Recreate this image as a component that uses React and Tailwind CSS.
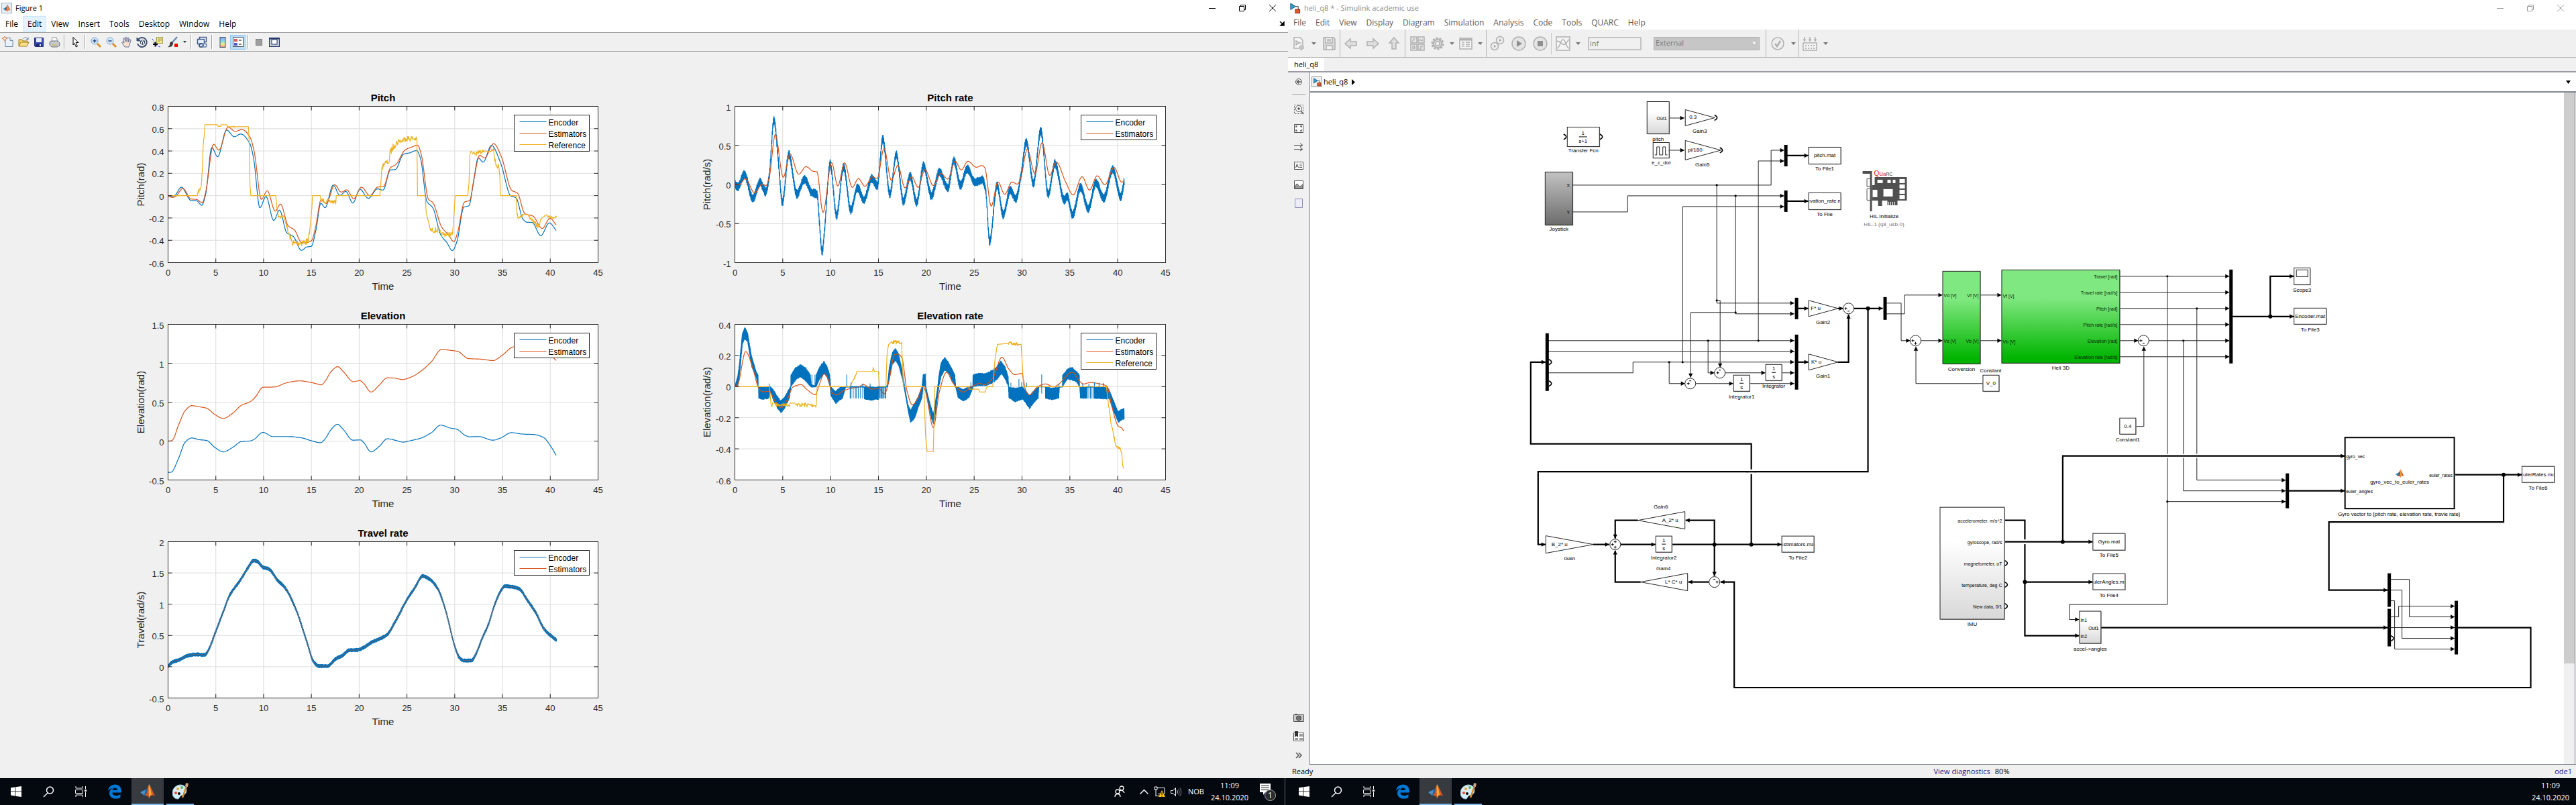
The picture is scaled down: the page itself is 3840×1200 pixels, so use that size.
import React from "react";

const BLUE = "#0072bd";
const ORANGE = "#d95319";
const YELLOW = "#edb120";

/* ---------- trace helpers ---------- */

const parse = (s) =>
  s
    .trim()
    .split(/\s+/)
    .map((p) => p.split(",").map(Number));

function makeRandom(seed) {
  let s = seed;
  return () => {
    s = (s * 16807) % 2147483647;
    return s / 2147483647;
  };
}

function smoothAt(points) {
  const n = points.length;
  const d = [];
  for (let i = 0; i < n - 1; i++) d.push((points[i + 1][1] - points[i][1]) / (points[i + 1][0] - points[i][0]));
  const m = points.map((_, i) => {
    if (i === 0) return d[0];
    if (i === n - 1) return d[n - 2];
    return d[i - 1] * d[i] <= 0 ? 0 : (2 * d[i - 1] * d[i]) / (d[i - 1] + d[i]);
  });
  return (x) => {
    let i = 0;
    while (i < n - 2 && x > points[i + 1][0]) i++;
    const h = points[i + 1][0] - points[i][0];
    const t = (x - points[i][0]) / h;
    const t2 = t * t;
    const t3 = t2 * t;
    return (
      (2 * t3 - 3 * t2 + 1) * points[i][1] +
      (t3 - 2 * t2 + t) * h * m[i] +
      (-2 * t3 + 3 * t2) * points[i + 1][1] +
      (t3 - t2) * h * m[i + 1]
    );
  };
}

function samples(trace) {
  const points = parse(trace.pts);
  const rnd = makeRandom(trace.seed || 7);
  const out = [];
  if (trace.kind === "smooth") {
    const f = smoothAt(points);
    for (let x = points[0][0]; x <= points[points.length - 1][0]; x += 2) out.push([x, f(x)]);
  } else if (trace.kind === "noisy") {
    const f = smoothAt(points);
    let k = 0;
    for (let x = points[0][0]; x <= points[points.length - 1][0]; x += 1) {
      k++;
      out.push([x, f(x) + (k % 2 ? 1 : -1) * trace.amp * (0.65 + 0.35 * rnd())]);
    }
  } else if (trace.kind === "band") {
    for (let i = 0; i < points.length - 1; i++) {
      const [xa, ta, ba] = points[i];
      const [xb, tb, bb] = points[i + 1];
      for (let x = xa; x < xb; x += 1) {
        const t = (x - xa) / (xb - xa);
        const top = ta + (tb - ta) * t;
        const bottom = ba + (bb - ba) * t;
        const j = (bottom - top) * 0.08 * rnd();
        out.push([x, top + j], [x + 0.5, bottom - j]);
      }
    }
  } else {
    points.forEach(([x, y, amp], i) => {
      out.push([x, y]);
      const next = points[i + 1];
      if (amp && next) {
        for (let u = x + 1.5; u < next[0]; u += 1.5) {
          const t = (u - x) / (next[0] - x);
          out.push([u, y + (next[1] - y) * t + (rnd() - 0.5) * 2 * amp]);
        }
      }
    });
  }
  return out;
}

function Chart({ title, ylabel, yticks, extent, plot, labelX, traces, spikes, legend }) {
  const [x0, y0, w, h] = plot;
  const [ex0, ex1, ey0, ey1] = extent;
  const X = (v) => x0 + ((v - ex0) * w) / (ex1 - ex0);
  const Y = (v) => y0 + ((v - ey0) * h) / (ey1 - ey0);
  const xt = [0, 5, 10, 15, 20, 25, 30, 35, 40, 45];
  const tx = (i) => x0 + (i * w) / 9;
  const ty = (i) => y0 + (i * h) / (yticks.length - 1);
  const cx = x0 + w / 2;
  const midY = y0 + h / 2;
  const legendH = legend.length === 3 ? 54 : 37;
  const colors = [BLUE, ORANGE, YELLOW];
  return (
    <svg viewBox="0 0 720 325" className="block w-full font-['Liberation_Sans',sans-serif]" role="img" aria-label={title}>
      <rect x={x0} y={y0} width={w} height={h} fill="#fff" />
      <g stroke="#dcdcdc">
        {xt.slice(1, -1).map((v, i) => (
          <line key={v} x1={tx(i + 1)} x2={tx(i + 1)} y1={y0} y2={y0 + h} />
        ))}
        {yticks.slice(1, -1).map((v, i) => (
          <line key={v} x1={x0} x2={x0 + w} y1={ty(i + 1)} y2={ty(i + 1)} />
        ))}
      </g>
      {traces.map((t, i) => (
        <polyline
          key={i}
          fill="none"
          stroke={t.color}
          strokeWidth={t.width || 1.2}
          strokeLinejoin="round"
          points={samples(t)
            .map(([a, b]) => `${X(a).toFixed(2)},${Y(b).toFixed(2)}`)
            .join(" ")}
        />
      ))}
      {spikes &&
        parse(spikes).map(([a, t, b], i) => <line key={i} x1={X(a)} x2={X(a)} y1={Y(t)} y2={Y(b)} stroke={BLUE} />)}
      <rect x={x0} y={y0} width={w} height={h} fill="none" stroke="#262626" />
      <g stroke="#262626">
        {xt.slice(1, -1).map((v, i) => (
          <path key={v} d={`M${tx(i + 1)} ${y0}v6M${tx(i + 1)} ${y0 + h}v-6`} />
        ))}
        {yticks.slice(1, -1).map((v, i) => (
          <path key={v} d={`M${x0} ${ty(i + 1)}h6M${x0 + w} ${ty(i + 1)}h-6`} />
        ))}
      </g>
      <g fill="#262626" fontSize="13">
        {xt.map((v, i) => (
          <text key={v} x={tx(i)} y={y0 + h + 19} textAnchor="middle">
            {v}
          </text>
        ))}
        {yticks.map((v, i) => (
          <text key={v} x={x0 - 6} y={ty(i) + 6} textAnchor="end">
            {v}
          </text>
        ))}
      </g>
      <text x={cx} y={y0 - 8} textAnchor="middle" fontSize="15" fontWeight="700" fill="#000">
        {title}
      </text>
      <text x={cx} y={y0 + h + 40} textAnchor="middle" fontSize="15" fill="#262626">
        Time
      </text>
      <text transform={`translate(${labelX} ${midY}) rotate(-90)`} textAnchor="middle" fontSize="15" fill="#262626">
        {ylabel}
      </text>
      <rect x={x0 + 516} y={y0 + 13} width="112" height={legendH} fill="#fff" stroke="#262626" />
      {legend.map((name, i) => (
        <g key={name}>
          <line x1={x0 + 524} x2={x0 + 564} y1={y0 + 23 + i * 17} y2={y0 + 23 + i * 17} stroke={colors[i]} />
          <text x={x0 + 567} y={y0 + 28 + i * 17} fontSize="12" fill="#000">
            {name}
          </text>
        </g>
      ))}
    </svg>
  );
}

const TWO = ["Encoder", "Estimators"];
const THREE = ["Encoder", "Estimators", "Reference"];

const travel =
  "110,1311 125,1295 145,1288 175,1272 205,1268 230,1270 240,1255 265,1185 290,1112 310,1055 325,1030 345,1000 370,955 388,930 398,932 420,955 437,960 465,1000 490,1028 525,1105 560,1220 583,1295 600,1310 630,1310 640,1300 655,1283 675,1273 698,1253 725,1252 745,1243 770,1225 800,1210 820,1198 850,1145 885,1072 910,1030 937,986 960,998 985,1030 1010,1105 1040,1235 1055,1278 1070,1290 1095,1290 1108,1270 1130,1210 1150,1160 1170,1090 1190,1040 1203,1022 1225,1024 1250,1032 1275,1070 1305,1120 1330,1175 1350,1198 1371,1216";

const charts = [
  {
    title: "Pitch",
    ylabel: "Pitch(rad)",
    yticks: ["0.8", "0.6", "0.4", "0.2", "0", "-0.2", "-0.4", "-0.6"],
    plot: [50.5, 28.5, 641, 233],
    extent: [110, 1506, 85, 785],
    labelX: 15,
    legend: THREE,
    traces: [
      {
        color: BLUE,
        kind: "smooth",
        pts: "110,487 125,487 133,483 153,447 185,507 203,508 219,528 232,480 252,269 271,311 300,191 325,221 346,209 375,250 388,320 408,539 428,489 453,596 472,550 495,650 517,668 543,730 560,715 575,712 590,640 606,519 620,539 646,438 668,484 687,466 710,518 733,456 760,497 790,455 808,460 832,370 848,368 874,300 895,293 917,283 930,320 950,510 970,540 995,660 1015,695 1033,731 1048,690 1070,537 1087,530 1100,440 1117,316 1133,335 1160,260 1190,340 1222,485 1240,495 1262,590 1275,604 1292,605 1320,664 1348,607 1370,641",
      },
      {
        color: ORANGE,
        kind: "smooth",
        pts: "110,487 125,493 135,488 158,453 185,500 203,502 221,517 232,470 258,255 275,281 305,178 328,197 350,189 375,220 390,290 413,502 432,463 458,554 475,523 500,620 520,638 545,697 560,695 576,686 590,620 606,506 624,520 651,436 672,469 690,459 713,499 738,447 765,485 790,447 810,443 832,360 850,345 880,280 900,268 920,259 932,300 955,500 970,517 998,625 1020,660 1038,691 1050,650 1072,515 1090,505 1103,410 1122,304 1138,316 1167,252 1192,310 1225,460 1245,475 1268,565 1295,577 1325,632 1350,586 1370,616",
      },
      {
        color: YELLOW,
        kind: "line",
        pts: "110,485 205,485 207,470,8 215,455 218,440 222,350 224,260 228,210 230,167 270,167 273,175 280,175 282,167 301,167 303,176,3 330,176 371,176 374,260 376,440 379,485 460,485 463,540,12 468,575,9 488,582,9 493,610,12 500,650,14 512,690,18 520,700,16 565,690,12 570,640 577,540 579,485 604,485 606,508,12 625,508,9 655,515 656,485 797,485,10 800,440,10 803,380,12 807,350,12 815,338,12 828,335 830,295,16 845,258,16 860,240,12 870,240,14 880,228,14 905,230,10 918,232 920,485 945,485 948,560 955,600,8 962,640,12 992,640,6 997,658,11 1033,658 1037,600 1042,485 1083,485 1087,430 1090,300 1093,285 1100,298,10 1118,296,12 1133,280,10 1145,288,8 1167,275 1170,330,16 1183,355,16 1187,390 1189,485 1240,485 1243,570,10 1248,583,8 1262,570 1276,570,9 1290,590,8 1300,610,12 1315,622 1320,590 1338,570 1343,580,6 1371,582",
      },
    ],
  },
  {
    title: "Pitch rate",
    ylabel: "Pitch(rad/s)",
    yticks: ["1", "0.5", "0", "-0.5", "-1"],
    plot: [55.5, 28.5, 642, 233],
    extent: [121, 1519, 85, 785],
    labelX: 19,
    legend: TWO,
    traces: [
      {
        color: BLUE,
        kind: "noisy",
        amp: 20,
        pts: "121,434 130,445 152,390 179,498 203,425 221,468 232,400 248,148 262,330 275,515 296,300 322,478 347,412 370,470 388,480 395,600 404,736 412,640 430,342 451,573 474,355 497,550 519,450 540,505 565,408 583,440 601,232 624,478 645,302 668,510 690,397 711,517 733,352 759,485 785,380 812,450 832,328 853,440 875,365 900,425 925,415 935,460 948,690 972,440 992,570 1015,460 1033,500 1050,390 1067,245 1090,430 1114,195 1138,480 1160,342 1190,505 1200,490 1217,572 1243,447 1268,545 1293,427 1318,498 1348,367 1373,490 1385,420",
      },
      {
        color: ORANGE,
        kind: "smooth",
        pts: "121,437 135,436 155,409 185,473 210,433 222,440 233,400 252,211 278,403 300,299 328,389 352,355 375,376 387,378 407,560 435,337 455,442 477,338 502,448 522,409 543,443 568,401 583,408 605,274 629,417 650,349 673,450 695,401 716,448 738,368 765,440 790,385 812,411 836,331 856,370 877,331 905,358 922,350 932,360 953,532 975,424 997,479 1020,424 1038,433 1050,400 1070,277 1095,388 1118,248 1143,394 1164,335 1195,425 1219,482 1248,400 1272,460 1297,396 1322,436 1352,359 1377,425 1385,415",
      },
    ],
  },
  {
    title: "Elevation",
    ylabel: "Elevation(rad)",
    yticks: ["1.5", "1", "0.5", "0", "-0.5"],
    plot: [50.5, 28.5, 641, 232],
    extent: [110, 1506, 81, 640],
    labelX: 15,
    legend: TWO,
    traces: [
      {
        color: BLUE,
        kind: "smooth",
        pts: "110,613 120,612 145,560 165,505 187,489 210,495 235,498 262,523 289,539 320,523 348,502 375,500 388,495 418,469 450,484 500,484 545,489 575,499 605,506 618,495 640,458 660,440 680,460 710,497 735,496 745,505 769,539 795,520 822,492 850,498 872,504 900,498 930,490 965,470 995,443 1025,453 1048,458 1075,480 1090,485 1118,484 1165,497 1190,489 1225,470 1260,475 1300,477 1330,488 1350,515 1371,553",
      },
      {
        color: ORANGE,
        kind: "smooth",
        pts: "110,500 122,499 145,440 165,392 187,373 210,377 235,382 262,405 289,419 320,400 348,372 378,358 395,340 418,307 455,306 495,291 537,284 580,291 608,298 620,285 640,250 661,233 680,252 712,287 733,283 745,293 769,324 795,300 822,273 845,274 870,279 900,270 930,250 965,215 997,172 1050,178 1085,204 1125,206 1165,211 1195,192 1232,162 1300,160 1340,180 1371,212",
      },
    ],
  },
  {
    title: "Elevation rate",
    ylabel: "Elevation(rad/s)",
    yticks: ["0.4", "0.2", "0", "-0.2", "-0.4", "-0.6"],
    plot: [55.5, 28.5, 642, 232],
    extent: [121, 1519, 100, 797],
    labelX: 19,
    legend: THREE,
    traces: [
      {
        color: BLUE,
        kind: "band",
        pts: "121,378,380 130,330,378 135,280,340 145,140,190 153,112,165 162,135,180 175,240,290 190,310,340 196,325,378 197,379,380 198,379,432 212,379,437 231,379,432 236,379,400 245,390,440 258,420,475 270,440,498 282,425,478 298,385,430 302,379,381 303,325,379 318,292,350 334,280,335 350,292,355 366,325,379 369,370,381 382,375,380 385,325,379 395,290,350 410,264,320 420,285,340 429,325,378 432,379,420 448,400,455 462,379,440 470,379,432 480,379,381 540,379,381 541,379,435 565,379,441 586,379,437 587,379,381 612,379,381 616,370,379 622,290,345 632,225,280 642,207,262 652,230,285 665,310,350 675,400,425 683,460,490 691,482,542 705,450,520 715,425,475 728,379,430 732,322,379 739,322,379 741,379,410 748,420,455 758,470,520 765,500,548 770,460,520 778,390,430 783,330,379 790,270,335 802,247,305 815,270,320 835,325,378 838,379,385 845,379,430 862,390,445 880,379,430 893,379,385 894,325,379 912,318,375 935,320,375 955,305,365 970,290,350 985,262,322 998,290,345 1008,330,379 1010,379,430 1030,385,448 1055,379,435 1062,390,450 1077,418,478 1092,395,450 1105,379,432 1107,379,380 1128,379,380 1129,379,432 1150,385,438 1172,380,432 1174,379,381 1184,379,381 1185,325,379 1200,300,345 1215,291,350 1230,310,360 1239,325,379 1240,379,381 1242,379,432 1262,379,432 1263,379,381 1285,379,381 1286,379,432 1328,379,436 1335,390,432 1350,440,490 1365,490,540 1375,480,530 1385,474,525",
      },
      {
        color: ORANGE,
        kind: "smooth",
        pts: "121,379 130,370 156,222 178,290 198,385 212,402 232,400 250,440 271,473 290,440 310,380 336,370 355,392 382,415 395,370 411,321 425,350 436,405 448,416 475,397 500,386 520,382 538,370 565,390 588,388 607,411 620,360 640,235 650,233 663,250 680,400 697,461 715,430 732,376 740,400 765,562 785,400 808,315 830,365 862,403 890,378 915,365 932,370 958,340 988,247 1010,300 1030,325 1052,320 1065,395 1077,416 1105,378 1130,367 1155,380 1170,370 1217,314 1240,355 1253,367 1275,360 1300,365 1328,376 1345,470 1365,555 1377,565 1384,580",
      },
      {
        color: YELLOW,
        kind: "line",
        pts: "121,379 233,379 238,455 241,470 243,452 250,452 253,460,9 299,460 301,452 316,453 319,460,10 385,462 388,379 495,379 499,365 505,350,10 513,330 517,311 568,311 570,293 574,311 587,311 590,379 611,379 615,230 620,190 628,180,9 662,180 668,379 734,379 740,600 745,670 765,670 768,500 770,379 880,379 882,390 912,390 915,403 934,403 936,390 940,379 958,379 965,260 973,190 1008,185,8 1040,190 1050,190 1055,300 1058,379 1327,379 1333,450,8 1340,520,12 1350,600,12 1360,650,5 1372,655,6 1376,670 1380,735 1384,745",
      },
    ],
    spikes:
      "232,365,379 371,325,379 381,325,379 484,325,379 495,379,432 498,360,432 505,379,432 512,379,432 516,379,432 522,379,432 529,379,432 536,365,432 560,365,379 590,379,432 592,379,432 595,379,432 598,379,432 601,379,432 604,379,432 608,379,432 611,379,432 887,360,379 1017,362,379 1043,345,379 1052,360,379 1068,362,379 1117,325,410 1173,365,379 1250,365,379 1265,379,432 1270,365,432 1275,379,432 1280,379,432 1288,360,379 1303,362,379 1317,362,379",
  },
  {
    title: "Travel rate",
    ylabel: "Travel(rad/s)",
    yticks: ["2", "1.5", "1", "0.5", "0", "-0.5"],
    plot: [50.5, 27.5, 641, 233],
    extent: [110, 1506, 862, 1425],
    labelX: 15,
    legend: TWO,
    traces: [
      { color: BLUE, kind: "noisy", amp: 6, width: 1.5, pts: travel },
      { color: ORANGE, kind: "smooth", width: 0.6, pts: travel },
    ],
  },
];

/* ---------- shared glyphs ---------- */

function MatlabMark({ className }) {
  return (
    <svg viewBox="0 0 24 24" className={className} aria-hidden="true">
      <path d="M1 14l8-4 3 3-5 6z" fill="#4a90c8" />
      <path d="M9 10c2-1 3-4 5-7l1 9-3 5-3 2-2 0z" fill="#2b5f8c" />
      <path d="M14 2c3 3 6 12 9 17-4-1-7-1-9 4-1-4-3-4-6-4 4-3 4-12 6-17z" fill="#d6562b" />
      <path d="M14 2c2 4 3 10 4 16-2 0-3 2-4 5 0-8-1-14 0-21z" fill="#f3a83b" />
    </svg>
  );
}

function SimulinkMark({ className }) {
  return (
    <svg viewBox="0 0 18 18" className={className} aria-hidden="true">
      <path d="M2 1l8 5-8 5z" fill="#2b9fd8" stroke="#1c4d70" />
      <path d="M10 6h4v5" fill="none" stroke="#333" />
      <rect x="9.500" y="10.500" width="7" height="6" fill="#e0572a" stroke="#7c2a10" />
    </svg>
  );
}

function WindowControls({ color }) {
  return (
    <div className="ml-auto flex pr-px">
      {["Minimize", "Restore", "Close"].map((name, i) => (
        <button key={name} aria-label={name} className="flex h-6 w-[45px] items-center justify-center">
          <svg width="10" height="10" viewBox="0 0 10 10" fill="none" stroke={color} aria-hidden="true">
            {i === 0 && <path d="M0 5.500h10" />}
            {i === 1 && <path d="M.5 2.500h7v7h-7zM2.500 2.500v-2h7v7h-2" />}
            {i === 2 && <path d="M0 0l10 10M10 0L0 10" />}
          </svg>
        </button>
      ))}
    </div>
  );
}

/* ---------- figure window ---------- */

const figureTools = [
  {
    name: "New Figure",
    art: (
      <g>
        <path d="M5 2.500h7l4 4v9H5z" fill="#eaf3fc" stroke="#6f87a8" />
        <path d="M12 2.500v4h4" fill="#fff" stroke="#6f87a8" />
        <circle cx="4" cy="3.500" r="2.200" fill="#fff" stroke="#d9622b" />
        <path d="M4 0v1M4 6v2M0 3.500h1M7 3.500h1" stroke="#d9622b" />
      </g>
    ),
  },
  {
    name: "Open File",
    art: (
      <g>
        <path d="M2 15V5h5l1 2h7v3" fill="#f5d56b" stroke="#a07a1a" />
        <path d="M2 15l3-6h12l-3 6z" fill="#fbe28a" stroke="#a07a1a" />
        <path d="M9 4c2-3 5-2 6 0M16 2v3h-3" fill="none" stroke="#4a6a9a" />
      </g>
    ),
  },
  {
    name: "Save Figure",
    art: (
      <g>
        <path d="M2.500 2.500h13v13h-12l-1-1z" fill="#3549b5" stroke="#1d2a72" />
        <rect x="5" y="3" width="8" height="6" fill="#e9ecfb" />
        <rect x="5" y="11" width="8" height="4.500" fill="#1d2a72" />
        <rect x="10" y="12" width="2" height="3" fill="#dfe4f7" />
      </g>
    ),
  },
  {
    name: "Print Figure",
    art: (
      <g>
        <path d="M5 8l1-6h6l2 5" fill="#fff" stroke="#8a8f98" />
        <path d="M2 9l3-2h9l3 3v4l-4 2H5l-3-3z" fill="#c5c8ce" stroke="#6d7178" />
        <path d="M5 13h8" stroke="#d8b53a" />
      </g>
    ),
  },
  null,
  {
    name: "Edit Plot",
    art: <path d="M6 1.500l8 8h-4l2.500 5.500-2 1L8 10.500 6 13z" fill="#fff" stroke="#000" />,
  },
  null,
  {
    name: "Zoom In",
    art: (
      <g>
        <path d="M11 11l5 5" stroke="#d9902b" strokeWidth="3" />
        <circle cx="7" cy="7" r="5" fill="#cfe6fa" stroke="#7fa6c9" />
        <path d="M4.500 7h5M7 4.500v5" stroke="#1c3f77" strokeWidth="1.500" />
      </g>
    ),
  },
  {
    name: "Zoom Out",
    art: (
      <g>
        <path d="M11 11l5 5" stroke="#d9902b" strokeWidth="3" />
        <circle cx="7" cy="7" r="5" fill="#cfe6fa" stroke="#7fa6c9" />
        <path d="M4.500 7h5" stroke="#1c3f77" strokeWidth="1.500" />
      </g>
    ),
  },
  {
    name: "Pan",
    art: (
      <path
        d="M6 16l-4-6c-1-2 1-2 2-1l1 1-1-6c0-2 2-2 2 0l1 4 0-6c0-1 2-1 2 0l0 6 1-5c1-1 2-1 2 0l-1 6 2-4c1-1 2 0 2 1l-2 7-1 3z"
        fill="#fbe0cc"
        stroke="#5d6f9c"
      />
    ),
  },
  {
    name: "Rotate 3D",
    art: (
      <g fill="none" stroke="#3d4f6e">
        <path d="M3 5a7 7 0 1 1-1 6" strokeWidth="2" />
        <path d="M1 2v5h5z" fill="#3d4f6e" />
        <path d="M6.500 7l3-1.500 3 1.500v4l-3 1.500-3-1.500zM6.500 7l3 1.500 3-1.500M9.500 8.500v4" />
      </g>
    ),
  },
  {
    name: "Data Cursor",
    art: (
      <g>
        <rect x="7.500" y="1.500" width="9" height="9" fill="#f5efa0" stroke="#a29a3c" />
        <path d="M9 4h6M9 6h6M9 8h4" stroke="#a29a3c" />
        <path d="M1 4c2 2 2 6 4 8s5 3 8 4" fill="none" stroke="#3b3bd8" strokeDasharray="3 2" />
        <path d="M2 12h7M5.500 8.500v7" stroke="#000" strokeWidth="2" />
      </g>
    ),
  },
  {
    name: "Brush Data",
    art: (
      <g>
        <path d="M15 1L8 9" stroke="#6f8fb5" strokeWidth="2.500" />
        <path d="M8 8c-3 0-4 2-4 4s-1 3-3 4c4 1 8-1 8-6z" fill="#3b3b3b" />
        <rect x="11" y="11" width="5" height="5" fill="#f00" />
      </g>
    ),
  },
  "drop",
  null,
  {
    name: "Link Plot",
    art: (
      <g fill="none" stroke="#3d5a8a">
        <rect x="5.500" y="1.500" width="10" height="7" fill="#fff" strokeWidth="1.500" />
        <rect x="2.500" y="4.500" width="10" height="7" fill="#e6eefa" strokeWidth="1.500" />
        <rect x="5" y="11" width="6" height="5" rx="2.500" strokeWidth="2" />
        <rect x="10" y="11" width="6" height="5" rx="2.500" strokeWidth="2" stroke="#7d93b5" />
      </g>
    ),
  },
  null,
  {
    name: "Insert Colorbar",
    art: (
      <g>
        <rect x="5" y="1.500" width="8" height="15" fill="url(#colorbar)" stroke="#3d4f6e" />
        <defs>
          <linearGradient id="colorbar" x1="0" x2="0" y1="0" y2="1">
            <stop offset="0" stopColor="#8ea3f0" />
            <stop offset=".4" stopColor="#84dbe8" />
            <stop offset=".7" stopColor="#f3ec8c" />
            <stop offset="1" stopColor="#f08a7a" />
          </linearGradient>
        </defs>
      </g>
    ),
  },
  {
    name: "Insert Legend",
    active: true,
    art: (
      <g>
        <rect x="1.500" y="1.500" width="15" height="14" fill="#fff" stroke="#3d4f6e" />
        <rect x="3" y="4" width="5" height="4" fill="#e05555" />
        <rect x="3" y="10" width="5" height="4" fill="#5555d0" />
        <path d="M10 6h4M10 12h4" stroke="#000" />
      </g>
    ),
  },
  null,
  {
    name: "Hide Plot Tools",
    art: <rect x="4.500" y="4.500" width="9" height="9" fill="#9d9d9d" stroke="#7e7e7e" />,
  },
  {
    name: "Show Plot Tools",
    art: (
      <g>
        <rect x="1.500" y="2.500" width="15" height="13" fill="#c4cbd8" stroke="#24356b" />
        <path d="M1 3.500h16" stroke="#24356b" strokeWidth="2" />
        <rect x="5" y="5" width="8" height="7" fill="#fff" stroke="#24356b" />
      </g>
    ),
  },
];

function FigureWindow() {
  return (
    <section className="flex min-h-0 flex-1 flex-col bg-[#f0f0f0]">
      <header className="flex h-6 items-center bg-white pl-[2px]">
        <span className="flex h-4 w-4 items-center justify-center border border-[#9fb2c4] bg-[#e6eef5]">
          <MatlabMark className="h-3 w-3" />
        </span>
        <h1 className="ml-[5px] text-[11px] leading-4 text-black">Figure 1</h1>
        <WindowControls color="#000" />
      </header>
      <nav className="flex h-6 bg-white pl-px text-xs text-black">
        {["File", "Edit", "View", "Insert", "Tools", "Desktop", "Window", "Help"].map((m) => (
          <button key={m} className={m === "Edit" ? "border border-[#cce8ff] bg-[#e5f3ff] px-[6px]" : "px-[7px]"}>
            {m}
          </button>
        ))}
        <svg width="8" height="8" viewBox="0 0 8 8" className="mt-[7px] mr-[5px] ml-auto" aria-hidden="true">
          <path d="M1 1l5 5M7 2v5H2z" stroke="#000" strokeWidth="1.500" />
        </svg>
      </nav>
      <div className="flex h-[29px] items-center border-y border-y-[#a0a0a0]">
        {figureTools.map((t, i) => {
          if (t === null) return <span key={i} className="mx-[3px] h-[21px] w-[2px] border-l border-[#a0a0a0] bg-white" />;
          if (t === "drop")
            return (
              <button key={i} aria-label="Brush options" className="flex h-6 w-3 items-center justify-center">
                <svg width="5" height="3" viewBox="0 0 5 3" aria-hidden="true">
                  <path d="M0 0h5L2.500 3z" fill="#333" />
                </svg>
              </button>
            );
          return (
            <button
              key={i}
              aria-label={t.name}
              className={
                "flex h-[22px] w-[23px] items-center justify-center " +
                (t.active ? "border border-[#90c8f6] bg-[#c0dcf3]" : "")
              }
            >
              <svg width="18" height="18" viewBox="0 0 18 18" aria-hidden="true">
                {t.art}
              </svg>
            </button>
          );
        })}
      </div>
      <div className="grid grid-cols-2 gap-x-[120px] pt-[53px] pr-[160px] pl-[200px]">
        {charts.map((c) => (
          <Chart key={c.title} {...c} />
        ))}
      </div>
    </section>
  );
}

/* ---------- block diagram ---------- */

function Wire({ p, thick, arrow }) {
  const pts = parse(p);
  const [bx, by] = pts[pts.length - 1];
  const [ax, ay] = pts[pts.length - 2];
  const angle = (Math.atan2(by - ay, bx - ax) * 180) / Math.PI;
  return (
    <g>
      <polyline points={p} fill="none" stroke={thick ? "#000" : "#222"} strokeWidth={thick ? 2.2 : 1} />
      {arrow && <path d="M0 0L-6-3.200V3.200z" fill="#000" transform={`translate(${bx} ${by}) rotate(${angle})`} />}
    </g>
  );
}

const Dot = ({ x, y, big }) => <circle cx={x} cy={y} r={big ? 3 : 1.6} fill="#000" />;
const Bar = ({ x, y, h }) => <rect x={x - 2} y={y} width="5" height={h} fill="#000" />;
const Label = ({ x, y, children, size = 8, anchor = "middle", fill = "#000" }) => (
  <text x={x} y={y + 3} fontSize={size} textAnchor={anchor} fill={fill}>
    {children}
  </text>
);

function Box({ x, y, w = 48, h = 24, text, label, fill = "#fff", ly = 8 }) {
  return (
    <g>
      <rect x={x + 1} y={y + 1} width={w} height={h} fill="#bbb" />
      <rect x={x} y={y} width={w} height={h} fill={fill} stroke="#222" />
      {text && (
        <svg x={x + 1} y={y} width={w - 2} height={h}>
          <Label x={(w - 2) / 2} y={h / 2 - 0.5}>
            {text}
          </Label>
        </svg>
      )}
      {label && (
        <Label x={x + w / 2} y={y + h + ly}>
          {label}
        </Label>
      )}
    </g>
  );
}

const Fraction = ({ x, y, top, bottom, w = 8 }) => (
  <g>
    <Label x={x} y={y - 6}>
      {top}
    </Label>
    <line x1={x - w / 2} x2={x + w / 2} y1={y} y2={y} stroke="#000" />
    <Label x={x} y={y + 6}>
      {bottom}
    </Label>
  </g>
);

function Integrator({ x, y, label }) {
  return (
    <g>
      <Box x={x} y={y} w={24} h={24} label={label} />
      <Fraction x={x + 12} y={y + 12} top="1" bottom="s" w={6} />
    </g>
  );
}

function Gain({ x, y, w, h, text, label, tx, lx, ly, flip }) {
  const pts = flip ? `${x + w},${y - h / 2} ${x + w},${y + h / 2} ${x},${y}` : `${x},${y - h / 2} ${x},${y + h / 2} ${x + w},${y}`;
  return (
    <g>
      <polygon points={pts} fill="#fff" stroke="#222" />
      <Label x={tx} y={y - 1}>
        {text}
      </Label>
      <Label x={lx} y={ly}>
        {label}
      </Label>
    </g>
  );
}

function Sum({ x, y, marks }) {
  return (
    <g>
      <circle cx={x} cy={y} r="8" fill="#fff" stroke="#222" />
      {marks.map(([dx, dy, s], i) => (
        <path
          key={i}
          d={s === "+" ? `M${x + dx - 2} ${y + dy}h4M${x + dx} ${y + dy - 2}v4` : `M${x + dx - 1.5} ${y + dy}h3`}
          stroke="#000"
        />
      ))}
    </g>
  );
}

const Chevron = ({ x, y }) => <path d={`M${x} ${y - 4}q4 2 4 4q0 2-4 4`} fill="none" stroke="#000" strokeWidth="1.500" />;

const WHITE_CHIPS = [
  [2799, 268, 8, 5],
  [2814, 268, 5, 5],
  [2822, 268, 4, 5],
  [2808, 282, 14, 11],
  [2792, 283, 7, 11],
  [2832, 267, 8, 6],
  [2832, 275, 8, 6],
  [2832, 283, 8, 6],
  [2832, 291, 8, 6],
];

function Diagram() {
  return (
    <svg
      viewBox="1953 138 1870 1000"
      className="block w-full font-['Liberation_Sans',sans-serif]"
      role="img"
      aria-label="heli_q8 block diagram"
    >
      <defs>
        <linearGradient id="green" x1="0" x2="0" y1="0" y2="1">
          <stop offset=".3" stopColor="#80e880" />
          <stop offset=".95" stopColor="#00b400" />
        </linearGradient>
        <linearGradient id="gray" x1="0" x2="0" y1="0" y2="1">
          <stop offset="0" stopColor="#c2c2c2" />
          <stop offset="1" stopColor="#6c6c6c" />
        </linearGradient>
        <linearGradient id="pale" x1="0" x2="0" y1="0" y2="1">
          <stop offset=".3" stopColor="#fff" />
          <stop offset="1" stopColor="#d8d8d8" />
        </linearGradient>
      </defs>

      {/* input section */}
      <Wire p="2488,176 2511,176" arrow />
      <Box x={2455.5} y={151.5} w={33} h={48} fill="url(#pale)" label="pitch" />
      <Label x={2485} y={176} size={7} anchor="end">
        Out1
      </Label>
      <Gain x={2512.5} y={175.5} w={44} h={24} text="0.3" tx={2524} label="Gain3" lx={2534} ly={195} />
      <Chevron x={2556} y={175.5} />
      <Box x={2464.5} y={212.5} w={24} h={23} label="e_c_dot" ly={7} />
      <path d="M2467 231h3v-12h4v12h5v-12h4v12h3" fill="none" stroke="#222" />
      <Wire p="2488,224 2511,224" arrow />
      <Gain x={2512.5} y={224} w={53} h={29} text="pi/180" tx={2527} label="Gain5" lx={2538} ly={245} />
      <Chevron x={2564} y={224} />
      <Box x={2336.5} y={189.5} w={48} h={29} label="Transfer Fcn" ly={6} />
      <Fraction x={2360} y={204} top="1" bottom="s+1" w={12} />
      <Chevron x={2331} y={204} />
      <Chevron x={2385} y={204} />
      <Box x={2303.5} y={256.5} w={41} h={79} fill="url(#gray)" label="Joystick" ly={6} />
      <Label x={2338} y={276} size={7}>
        X
      </Label>
      <Label x={2338} y={316} size={7}>
        Y
      </Label>

      {/* verticals into the controller section */}
      <Wire p="2559.5,276 2559.5,452 2675,452" arrow />
      <Wire p="2559.5,448 2564.5,448 2564.5,548" arrow />
      <Wire p="2587.5,292 2587.5,468 2675,468" arrow />
      <Wire p="2587.5,466 2520.5,466 2520.5,563" arrow />
      <Wire p="2508.5,540 2508.5,308 2660,308" arrow />
      <Wire p="2621.5,508 2621.5,240 2660,240" arrow />
      <Wire p="2344,276 2640.5,276 2640.5,224 2660,224" arrow />
      <Wire p="2344,316 2426.5,316 2426.5,292 2660,292" arrow />
      <Dot x={2559.5} y={276} />
      <Dot x={2587.5} y={292} />
      <Dot x={2559.5} y={448} />
      <Dot x={2587.5} y={466} />
      <Bar x={2662} y={216} h={32} />
      <Bar x={2662} y={284} h={32} />
      <Wire p="2664,232 2696,232" thick arrow />
      <Wire p="2664,300 2696,300" thick arrow />
      <Box x={2696.5} y={219.5} w={48} h={25} text="pitch.mat" label="To File1" ly={7} />
      <Box x={2696.5} y={287.5} w={48} h={25} text="elevation_rate.mat" label="To File" ly={7} />

      {/* HIL board */}
      <path d="M2777 255h14v60h-3v-56h-11z" fill="#505050" />
      <path d="M2791 276h4v-12h48v35h-14v7h-15v-7h-8v8h-6v-8h-9z" fill="#505050" />
      {WHITE_CHIPS.map(([x, y, w, h]) => (
        <rect key={`${x}-${y}`} x={x} y={y} width={w} height={h} fill="#fff" />
      ))}
      <path d="M2783.500 266.500h5v12h-5zM2783.500 281.500h5v17h-5z" fill="#fff" stroke="#505050" />
      <path d="M2816 301v5M2819 301v5M2822 301v5M2825 301v5" stroke="#fff" />
      <text x="2794" y="262" fontSize="10" fill="#e02020">
        Qu<tspan fontSize="8">a</tspan>
        <tspan fontSize="7" fill="#333">
          RC
        </tspan>
      </text>
      <Label x={2809} y={322}>
        HIL Initialize
      </Label>
      <Label x={2809} y={334} fill="#777">
        HIL-1 (q8_usb-0)
      </Label>

      {/* state feedback */}
      <Wire p="2308,508 2675,508" arrow />
      <Wire p="2308,524 2675,524" arrow />
      <Wire p="2308,556 2434.5,556 2434.5,540 2675,540" arrow />
      <Wire p="2546.5,508 2546.5,556 2556,556" arrow />
      <Wire p="2488.5,540 2488.5,572 2512,572" arrow />
      <Wire p="2572,556 2632,556" arrow />
      <Wire p="2656,556 2675,556" arrow />
      <Wire p="2528,572 2584,572" arrow />
      <Wire p="2608,572 2675,572" arrow />
      <Dot x={2546.5} y={508} />
      <Dot x={2621.5} y={508} />
      <Dot x={2488.5} y={540} />
      <Dot x={2508.5} y={540} />
      <Sum x={2564} y={556} marks={[[-3, 0, "+"], [0, -4, "-"]]} />
      <Sum x={2520} y={572} marks={[[-3, 0, "+"], [0, -4, "-"]]} />
      <Integrator x={2632.5} y={543.5} label="Integrator" />
      <Integrator x={2584.5} y={559.5} label="Integrator1" />
      <Bar x={2306} y={497} h={86} />
      <Chevron x={2309} y={540} />
      <Chevron x={2309} y={572} />
      <Bar x={2678} y={444} h={32} />
      <Bar x={2678} y={499} h={82} />
      <Wire p="2680,460 2696,460" thick arrow />
      <Wire p="2680,540 2696,540" thick arrow />
      <Wire p="2740,540 2756,540 2756,469" thick arrow />
      <Wire p="2740,460 2748,460" thick arrow />
      <Gain x={2696.5} y={460} w={44} h={24} text="F* u" tx={2707} label="Gain2" lx={2718} ly={480} />
      <Gain x={2696.5} y={540} w={44} h={24} text="K* u" tx={2708} label="Gain1" lx={2718} ly={560} />
      <Wire p="2764,460 2807,460" thick arrow />
      <Sum x={2756} y={460} marks={[[-4, 0, "+"], [0, 4, "-"]]} />
      <Wire p="2785,460 2785,703.500 2293,703.500 2293,812 2304,812" thick arrow />
      <Dot x={2785} y={460} big />
      <Wire p="2611,812 2611,662 2282,662 2282,540 2304,540" thick arrow />
      <line x1="2606" x2="2616" y1="703.500" y2="703.500" stroke="#fff" strokeWidth="7" />
      <line x1="2604" x2="2618" y1="703.500" y2="703.500" stroke="#000" strokeWidth="2.200" />

      {/* plant */}
      <Bar x={2810} y={443} h={34} />
      <Wire p="2812,452 2834.500,452 2834.500,508 2848,508" arrow />
      <Wire p="2812,468 2839.500,468 2839.500,440 2896,440" arrow />
      <Wire p="2864,508 2896,508" arrow />
      <Wire p="2956,572 2856.500,572 2856.500,517" arrow />
      <Sum x={2856} y={508} marks={[[-4, 0, "+"], [0, 4, "+"]]} />
      <Box x={2896.5} y={404.5} w={56} h={138} fill="url(#green)" label="Conversion" />
      <Box x={2956.5} y={559.5} w={24} h={24} text="V_0" />
      <Label x={2968} y={552}>
        Constant
      </Label>
      <Wire p="2953,440 2984,440" arrow />
      <Wire p="2953,508 2984,508" arrow />
      <Box x={2984.5} y={402.5} w={176} h={139} fill="url(#green)" label="Heli 3D" ly={7} />
      {[
        [2898, 440, "Vd [V]", "start"],
        [2898, 508, "Vs [V]", "start"],
        [2950, 440, "Vf [V]", "end"],
        [2950, 508, "Vb [V]", "end"],
        [2986, 441, "Vf [V]", "start"],
        [2986, 509, "Vb [V]", "start"],
        [3157, 412, "Travel [rad]", "end"],
        [3157, 436, "Travel rate [rad/s]", "end"],
        [3157, 460, "Pitch [rad]", "end"],
        [3157, 484, "Pitch rate [rad/s]", "end"],
        [3157, 508, "Elevation [rad]", "end"],
        [3157, 532, "Elevation rate [rad/s]", "end"],
      ].map(([x, y, t, a]) => (
        <Label key={`${x}-${y}`} x={x} y={y} size={7} anchor={a} fill="#062806">
          {t}
        </Label>
      ))}
      <Wire p="3161,412 3324,412" arrow />
      <Wire p="3161,436 3324,436" arrow />
      <Wire p="3161,460 3324,460" arrow />
      <Wire p="3161,484 3324,484" arrow />
      <Wire p="3161,508 3188,508" arrow />
      <Wire p="3204,508 3324,508" arrow />
      <Wire p="3161,532 3324,532" arrow />
      <Wire p="3184,636 3196.500,636 3196.500,517" arrow />
      <Sum x={3196} y={508} marks={[[-4, 0, "+"], [0, 4, "-"]]} />
      <Box x={3160.5} y={623.5} w={24} h={24} text="0.4" label="Constant1" />
      <Wire p="3231.500,412 3231.500,901.500 3085.500,901.500 3085.500,924 3100,924" arrow />
      <Wire p="3275.500,460 3275.500,716 3408,716" arrow />
      <Wire p="3255.500,508 3255.500,732 3408,732" arrow />
      <Wire p="3231.500,748 3408,748" arrow />
      <Dot x={3231.5} y={412} />
      <Dot x={3275.5} y={460} />
      <Dot x={3255.5} y={508} />
      <Dot x={3231.5} y={748} />
      <Bar x={3326} y={402} h={140} />
      <Wire p="3328,472 3420,472" thick arrow />
      <Wire p="3385,472 3385,412 3420,412" thick arrow />
      <Dot x={3385} y={472} big />
      <Box x={3420.5} y={399.5} w={24} h={25} label="Scope3" />
      <rect x="3424" y="402.500" width="17" height="10" fill="#fff" stroke="#222" />
      <Box x={3420.5} y={459.5} w={48} h={24} text="Encoder.mat" label="To File3" />

      {/* gyro conversion */}
      <line x1="3226" x2="3280" y1="680" y2="680" stroke="#fff" strokeWidth="6" />
      <Wire p="3075.500,808 3075.500,680 3496,680" thick arrow />
      <Bar x={3410} y={706} h={52} />
      <Wire p="3412,732 3496,732" thick arrow />
      <rect x="3496.500" y="652.500" width="163" height="106" fill="#fff" stroke="#000" strokeWidth="2" />
      <Label x={3498} y={680} size={7} anchor="start">
        gyro_vec
      </Label>
      <Label x={3498} y={732} size={7} anchor="start">
        euler_angles
      </Label>
      <Label x={3657} y={708} size={7} anchor="end">
        euler_rates
      </Label>
      <svg x="3571" y="699" width="14" height="14">
        <MatlabMark className="h-[14px] w-[14px]" />
      </svg>
      <Label x={3578} y={718}>
        gyro_vec_to_euler_rates
      </Label>
      <Label x={3577} y={766}>
        Gyro vector to [pitch rate, elevation rate, travle rate]
      </Label>
      <Wire p="3661,708 3760,708" thick arrow />
      <Wire p="3733,708 3733,778.500 3472.500,778.500 3472.500,880 3560,880" thick arrow />
      <Dot x={3733} y={708} big />
      <Box x={3760.5} y={695.5} w={48} h={24} text="EulerRates.mat" label="To File6" />

      {/* IMU */}
      <Wire p="2988,776 3019,776 3019,948 3100,948" thick arrow />
      <line x1="3013" x2="3025" y1="808" y2="808" stroke="#fff" strokeWidth="7" />
      <Wire p="2988,808 3120,808" thick arrow />
      <Wire p="3019,868 3120,868" thick arrow />
      <Dot x={3075.5} y={808} big />
      <Dot x={3019} y={868} big />
      <Box x={2892.5} y={756.5} w={96} h={167} fill="url(#pale)" label="IMU" ly={7} />
      {[
        [776, "accelerometer, m/s^2"],
        [808, "gyroscope, rad/s"],
        [840, "magnetometer, uT"],
        [872, "temperature, deg C"],
        [904, "New data, 0/1"],
      ].map(([y, t]) => (
        <Label key={t} x={2985} y={y} size={7} anchor="end">
          {t}
        </Label>
      ))}
      <Chevron x={2989} y={840} />
      <Chevron x={2989} y={872} />
      <Chevron x={2989} y={904} />
      <Box x={3120.5} y={795.5} w={48} h={25} text="Gyro.mat" label="To File5" ly={7} />
      <Box x={3120.5} y={855.5} w={48} h={24} text="EulerAngles.mat" label="To File4" />
      <Box x={3100.5} y={911.5} w={32} h={48} fill="url(#pale)" label="accel->angles" />
      <Label x={3102} y={924} size={7} anchor="start">
        In1
      </Label>
      <Label x={3102} y={948} size={7} anchor="start">
        In2
      </Label>
      <Label x={3129} y={936} size={7} anchor="end">
        Out1
      </Label>
      <Wire p="3133,936 3560,936" thick arrow />

      {/* measurement routing */}
      <Wire p="3564,864 3592.500,864 3592.500,920 3660,920" arrow />
      <Wire p="3564,880 3581.500,880 3581.500,952 3660,952" arrow />
      <Wire p="3564,896 3570.500,896 3570.500,968 3660,968" arrow />
      <Wire p="3564,920 3576.500,920 3576.500,904 3660,904" arrow />
      <Wire p="3564,936 3660,936" arrow />
      <Bar x={3562} y={855} h={50} />
      <Bar x={3562} y={908} h={56} />
      <Chevron x={3565} y={952} />
      <Bar x={3662} y={896} h={80} />
      <Wire p="3664,936 3773.500,936 3773.500,1025.500 2585.500,1025.500 2585.500,868 2565,868" thick arrow />

      {/* estimator */}
      <Wire p="2375,812 2399,812" thick arrow />
      <Wire p="2416,812 2468,812" thick arrow />
      <Wire p="2493,812 2656,812" thick arrow />
      <Wire p="2556,812 2556,776 2513,776" thick arrow />
      <Wire p="2442,776 2408,776 2408,803" thick arrow />
      <Wire p="2556,812 2556,859" thick arrow />
      <Wire p="2548,868 2517,868" thick arrow />
      <Wire p="2446,868 2408,868 2408,821" thick arrow />
      <Dot x={2556} y={812} big />
      <Dot x={2611} y={812} big />
      <Gain x={2304.5} y={812} w={71} h={26} text="B_2* u" tx={2325} label="Gain" lx={2340} ly={832} />
      <Gain flip x={2442} y={776} w={70} h={26} text="A_2* u" tx={2490} label="Gain6" lx={2476} ly={755} />
      <Gain flip x={2446} y={868} w={70} h={26} text="L* C* u" tx={2495} label="Gain4" lx={2480} ly={847} />
      <Sum x={2408} y={812} marks={[[-4, 0, "+"], [0, -4, "+"], [0, 4, "+"]]} />
      <Sum x={2556} y={868} marks={[[4, 0, "+"], [0, -4, "-"]]} />
      <Integrator x={2468.5} y={799.5} label="Integrator2" />
      <Box x={2656.5} y={799.5} w={48} h={24} text="Estimators.mat" label="To File2" />
    </svg>
  );
}

/* ---------- model window ---------- */

const Caret = () => (
  <svg width="7" height="4" viewBox="0 0 7 4" aria-hidden="true">
    <path d="M0 0h7L3.500 4z" fill="#777" />
  </svg>
);

function Tool({ name, className, children }) {
  return (
    <button aria-label={name} className={"flex h-6 shrink-0 items-center justify-center " + className}>
      <svg width="24" height="24" viewBox="0 0 24 24" fill="none" stroke="#b0b0b0" strokeWidth="1.500" aria-hidden="true">
        {children}
      </svg>
    </button>
  );
}

const Drop = ({ name, className }) => (
  <button aria-label={name} className={"flex h-6 shrink-0 items-center justify-center " + className}>
    <Caret />
  </button>
);

const Divider = () => <span className="h-full w-px shrink-0 bg-[#b4b4b4]" />;

function SideButton({ name, children }) {
  return (
    <button aria-label={name} className="flex h-7 w-full items-center justify-center">
      <svg width="16" height="16" viewBox="0 0 16 16" fill="none" stroke="#555" aria-hidden="true">
        {children}
      </svg>
    </button>
  );
}

function ModelWindow() {
  return (
    <section className="flex min-h-0 flex-1 flex-col bg-[#f0f0f0]">
      <header className="flex h-6 items-center bg-white pl-[2px]">
        <SimulinkMark className="h-[17px] w-[17px]" />
        <h1 className="ml-[5px] text-[11px] leading-4 text-[#8c8c8c]">heli_q8 * - Simulink academic use</h1>
        <WindowControls color="#999" />
      </header>
      <nav className="flex h-5 bg-white pl-px text-xs text-[#5a5a5a]">
        {["File", "Edit", "View", "Display", "Diagram", "Simulation", "Analysis", "Code", "Tools", "QUARC", "Help"].map((m) => (
          <button key={m} className="px-[7px]">
            {m}
          </button>
        ))}
      </nav>
      <div className="flex h-[42px] items-center border-b border-[#b4b4b4]">
        <Tool name="New model" className="w-8">
          <path d="M5 3h9l4 4v12H5z" fill="#f6f6f6" />
          <path d="M8 8l5 3-5 3zM13 11h3" />
          <path d="M16 14v8M12 18h8" stroke="#c4c4c4" strokeWidth="4" />
        </Tool>
        <Drop name="New options" className="w-3" />
        <Tool name="Save" className="w-[33px]">
          <path d="M4 3h15l2 2v16H4z" fill="#dadada" />
          <path d="M7 3h10v8H7zM8 15h9v6H8z" fill="#f4f4f4" />
          <path d="M9 6h6M9 8h6" />
        </Tool>
        <Divider />
        <Tool name="Back" className="w-8">
          <path d="M3 12l8-7v4h9v6h-9v4z" fill="#dedede" />
        </Tool>
        <Tool name="Forward" className="w-8">
          <path d="M21 12l-8-7v4H4v6h9v4z" fill="#dedede" />
        </Tool>
        <Tool name="Up" className="w-8">
          <path d="M12 3l7 8h-4v9H9v-9H5z" fill="#dedede" />
        </Tool>
        <Divider />
        <Tool name="Library Browser" className="w-9">
          <path d="M2 2h9v9H2zM13 2h9v9h-9z" fill="#e4e4e4" />
          <path d="M2 13h9v9H2zM13 13h9v9h-9z" fill="#e4e4e4" />
          <path d="M4 9l3-3v-2M15 8c1-5 3 3 5-2M5 16h3v3H5zM15 20h2v-4h3" />
        </Tool>
        <Tool name="Model Configuration" className="w-6">
          <circle cx="12" cy="12" r="8" fill="#dadada" strokeWidth="3" strokeDasharray="3 2" />
          <circle cx="12" cy="12" r="6" fill="#dadada" />
          <circle cx="12" cy="12" r="3" fill="#f4f4f4" />
        </Tool>
        <Drop name="Configuration options" className="w-[18px]" />
        <Tool name="Model Explorer" className="w-6">
          <path d="M3 4h18v16H3z" fill="#f4f4f4" />
          <path d="M3 6h18" strokeWidth="3" />
          <path d="M6 10h4M12 10h6M6 13h4M12 13h6M6 16h4M12 16h6" />
        </Tool>
        <Drop name="Explorer options" className="w-[18px]" />
        <Divider />
        <Tool name="Step" className="w-8">
          <circle cx="8" cy="16" r="5.500" fill="#eee" />
          <circle cx="16" cy="7" r="5.500" fill="#eee" />
          <path d="M7 14l3 2-3 2zM15 5l3 2-3 2z" fill="#999" stroke="none" />
        </Tool>
        <Tool name="Run" className="w-8">
          <circle cx="12" cy="12" r="10" fill="#e4e4e4" />
          <path d="M9 7l8 5-8 5z" fill="#8f8f8f" stroke="none" />
        </Tool>
        <Tool name="Stop" className="w-8">
          <circle cx="12" cy="12" r="10" fill="#e4e4e4" />
          <path d="M8 8h8v8H8z" fill="#8f8f8f" stroke="none" />
        </Tool>
        <span className="h-8 w-px shrink-0 bg-[#c8c8c8]" />
        <Tool name="Data Inspector" className="w-[33px]">
          <path d="M2 2h20v20H2z" fill="#f4f4f4" />
          <path d="M3 19C8 18 8 6 12 6s4 12 9 13M3 8c6 1 8 7 12 5 3-2 4-6 6-7" />
        </Tool>
        <Drop name="Inspector options" className="w-3" />
        <input
          aria-label="Simulation stop time"
          defaultValue="inf"
          className="ml-[9px] h-5 w-20 shrink-0 border-2 border-[#c4c4c4] bg-[#f0f0f0] px-px text-[11px] text-[#7a7a7a]"
        />
        <span className="relative ml-[18px] flex h-5 w-[158px] shrink-0">
          <select
            aria-label="Simulation mode"
            className="w-full appearance-none border border-[#b0b0b0] bg-[#c6c6c6] px-[2px] text-[11px] text-[#7a7a7a]"
          >
            <option>External</option>
          </select>
          <svg width="8" height="6" viewBox="0 0 8 6" className="pointer-events-none absolute top-[7px] right-1" aria-hidden="true">
            <path d="M0 0h8L4 6z" fill="#f4f4f4" stroke="#999" strokeWidth=".6" />
          </svg>
        </span>
        <span className="ml-[9px] h-full w-px shrink-0 bg-[#b4b4b4]" />
        <Tool name="Model Advisor" className="w-[33px]">
          <circle cx="12" cy="12" r="9" fill="#eee" />
          <path d="M8 12l3 4 5-8" strokeWidth="2.500" />
        </Tool>
        <Drop name="Advisor options" className="w-[14px]" />
        <Divider />
        <Tool name="Build Model" className="w-[34px]">
          <path d="M4 2v6M12 2v6M20 2v6M2.500 5.500L4 8l1.500-2.500M10.500 5.500L12 8l1.500-2.500M18.500 5.500L20 8l1.500-2.500" />
          <path d="M2 11h20v11H2z" fill="#f4f4f4" />
          <path d="M5 15h2M9 15h2M13 15h2M17 15h2M5 19h2M9 19h2M13 19h2M17 19h2" strokeWidth="2" />
        </Tool>
        <Drop name="Build options" className="w-3" />
      </div>
      <div className="flex h-[22px] items-end border-b-2 border-[#9a9ca6]">
        <button className="h-5 bg-white px-[9px] text-[11px] text-black">heli_q8</button>
      </div>
      <div className="flex min-h-0 flex-1">
        <aside className="flex w-[32px] flex-col items-center">
          <SideButton name="Hide browser">
            <circle cx="8" cy="8" r="4.500" />
            <path d="M11 8H6M8 5.500L5.500 8 8 10.500" strokeWidth="1.500" />
          </SideButton>
          <span className="my-[4px] h-px w-5 bg-[#aaa]" />
          <div className="h-1" />
          <SideButton name="Zoom">
            <path d="M1.500 1.500h13v13h-13z" strokeDasharray="2 2" />
            <circle cx="8" cy="7" r="4.500" fill="#fff" />
            <path d="M6 7h4M8 5v4M11 10l4 5" strokeWidth="1.500" />
          </SideButton>
          <SideButton name="Fit to view">
            <path d="M1.500 2.500h13v12h-13z" fill="#fff" />
            <path d="M4 7V5h2M12 7V5h-2M4 10v2h2M12 10v2h-2" strokeWidth="1.500" />
          </SideButton>
          <SideButton name="Sample time">
            <path d="M1 5.500h12M10 2.500l4 3-4 2.500M1 11.500h12M10 8.500l4 3-4 2.500" />
          </SideButton>
          <SideButton name="Annotation">
            <path d="M1.500 2.500h13v11h-13z" fill="#fff" />
            <path d="M3.500 11l2-6 2 6M4 9h3M9 5.500h4M9 8h4M9 10.500h4" />
          </SideButton>
          <SideButton name="Image">
            <path d="M1.500 2.500h13v12h-13z" fill="#fff" />
            <path d="M2 14l1-4 2-3c2 0 3 4 5 4s2-3 4-3v6z" fill="#9a9a9a" />
          </SideButton>
          <SideButton name="Area">
            <path d="M2.500 1.500h11v13h-11z" fill="#ececfb" stroke="#8a8ab0" />
          </SideButton>
          <div className="mt-auto w-full">
            <SideButton name="Snapshot">
              <path d="M.5 3.500h15v10h-15z" fill="#c9c9c9" />
              <circle cx="8" cy="8.500" r="3.500" fill="#777" stroke="#333" />
              <path d="M2 2.500h4" />
            </SideButton>
            <SideButton name="Model data">
              <path d="M.5 2.500h15v12H.5z" fill="#fff" />
              <path d="M2 0h5v9L4.500 7 2 9z" fill="#333" stroke="none" />
              <path d="M9 4h5v4H9zM9 10h5v3H9zM2 10h5v3H2z" fill="#9a9a9a" stroke="none" />
            </SideButton>
            <SideButton name="More">
              <path d="M4 4l4 4-4 4M8 4l4 4-4 4" strokeWidth="1.500" />
            </SideButton>
          </div>
        </aside>
        <div className="flex min-w-0 flex-1 flex-col border-l border-[#828790]">
          <nav className="flex h-[30px] shrink-0 items-center border-b-2 border-[#828790] bg-white pl-[2px]">
            <span className="flex h-4 w-4 items-center justify-center border border-[#999] bg-[#f0f0f0]">
              <SimulinkMark className="h-[13px] w-[13px]" />
            </span>
            <a href="#heli_q8" className="ml-[2px] text-[11px] text-black">
              heli_q8
            </a>
            <svg width="5" height="9" viewBox="0 0 5 9" className="ml-[6px]" aria-hidden="true">
              <path d="M0 0l5 4.500L0 9z" />
            </svg>
            <svg width="7" height="5" viewBox="0 0 7 5" className="mr-[8px] ml-auto" aria-hidden="true">
              <path d="M0 0h7L3.500 5z" />
            </svg>
          </nav>
          <div className="flex min-h-0 flex-1 border-b border-[#828790] bg-white">
            <main className="min-w-0 flex-1 overflow-hidden">
              <Diagram />
            </main>
            <div className="w-4 bg-[#f0f0f0]">
              <div className="h-[85%] bg-[#cdcdcd]" />
            </div>
            <div className="w-[2px] border-l border-[#828790] bg-[#f0f0f0]" />
          </div>
        </div>
      </div>
      <footer className="grid h-5 grid-cols-3 items-center px-[6px] text-[11px] text-black">
        <span>Ready</span>
        <span className="ml-[118px] flex justify-center gap-[7px]">
          <a href="#diagnostics" className="text-[#1a1a8c]">
            View diagnostics
          </a>
          80%
        </span>
        <span className="text-right text-[#1a1a8c]">ode1</span>
      </footer>
    </section>
  );
}

/* ---------- taskbar ---------- */

function Taskbar({ tray }) {
  return (
    <footer className="flex h-10 shrink-0 items-stretch bg-[#04080f] text-white">
      <button aria-label="Start" className="flex w-12 items-center justify-center">
        <svg width="16" height="16" viewBox="0 0 16 16" fill="#fff" aria-hidden="true">
          <path d="M0 2.200l6.500-.9v6.200H0zM7.300 1.200L16 0v7.500H7.300zM0 8.300h6.500v6.200L0 13.600zM7.300 8.300H16V16l-8.700-1.200z" />
        </svg>
      </button>
      <button aria-label="Search" className="flex w-12 items-center justify-center">
        <svg width="17" height="17" viewBox="0 0 17 17" fill="none" stroke="#fff" strokeWidth="1.500" aria-hidden="true">
          <circle cx="10.500" cy="6" r="5" />
          <path d="M7 10l-6 6" />
        </svg>
      </button>
      <button aria-label="Task View" className="flex w-12 items-center justify-center">
        <svg width="17" height="16" viewBox="0 0 17 16" fill="none" stroke="#fff" aria-hidden="true">
          <path d="M1 0v3h10V0M1 16v-3h10v3M.5 5.500h11v5H.5zM15.500 0v4M15.500 9v7" />
          <path d="M14 5h3v3h-3z" fill="#fff" stroke="none" />
        </svg>
      </button>
      <button aria-label="Edge" className="ml-[3px] flex w-12 items-center justify-center">
        <svg width="22" height="22" viewBox="0 0 22 22" fill="#0078d7" aria-hidden="true">
          <path d="M1 10C1.500 4 6 .5 11.500.5 17 .5 21 4.500 21 10v2.500H7.500c0 3 2.500 4.500 5.500 4.500 2.500 0 4.500-.6 6.500-1.800V20c-2 1-4.500 1.600-7 1.600C6.500 21.600 3 18 3 13.500 3 10 5 7 8.500 5.800 5 6 2.500 7.500 1 10zm6.600-1.200h7.600c0-2-1.200-3.400-3.600-3.400S7.900 6.900 7.600 8.800z" />
        </svg>
      </button>
      <button aria-label="MATLAB" className="ml-px flex w-12 items-center justify-center border-b-2 border-[#76b9ed] bg-[#373b40]">
        <MatlabMark className="h-6 w-6" />
      </button>
      <button aria-label="Paint" className="ml-1 flex w-[41px] items-center justify-center border-b-2 border-[#76b9ed]">
        <svg width="24" height="26" viewBox="0 0 24 26" aria-hidden="true">
          <path d="M12 4C5 4 0 10 0 16s4 9 8 9c3 0 2-4 5-5 4-1 8-2 8-8 0-5-4-8-9-8z" fill="#d9edf7" stroke="#8ab4c8" />
          <circle cx="5" cy="16" r="2" fill="#e04a3a" />
          <circle cx="8" cy="10" r="2" fill="#f0a030" />
          <circle cx="14" cy="8" r="2" fill="#58b858" />
          <circle cx="10" cy="17" r="2" fill="#04080f" />
          <path d="M21 6l-6 17" stroke="#d98a2b" strokeWidth="2.500" />
          <path d="M19 6l1-5 4 1-1 5z" fill="#c9a37a" />
        </svg>
      </button>
      <div className="ml-auto flex items-center text-[11px] leading-[18px]">
        {tray && (
          <>
            <button aria-label="People" className="flex w-12 justify-center">
              <svg width="16" height="18" viewBox="0 0 16 18" fill="none" stroke="#fff" strokeWidth="1.300" aria-hidden="true">
                <circle cx="11" cy="4" r="3" />
                <path d="M8 8c3-2 6 0 7 3" />
                <circle cx="5" cy="9" r="3" />
                <path d="M1 17c0-6 8-6 8 0" />
              </svg>
            </button>
            <button aria-label="Show hidden icons" className="flex w-6 justify-center">
              <svg width="13" height="8" viewBox="0 0 13 8" fill="none" stroke="#fff" strokeWidth="1.500" aria-hidden="true">
                <path d="M.5 7.500l6-6 6 6" />
              </svg>
            </button>
            <button aria-label="Network" className="flex w-6 justify-center">
              <svg width="18" height="17" viewBox="0 0 18 17" fill="none" stroke="#fff" aria-hidden="true">
                <path d="M4 2.500h12v9H6M1 1h4v4H1zM3 5v10M3 14.500h6" />
                <path d="M12 6l5 10H7z" fill="#fbc10a" stroke="none" />
                <path d="M12 9v4M12 14v1.500" stroke="#000" />
              </svg>
            </button>
            <button aria-label="Volume" className="flex w-6 justify-center">
              <svg width="17" height="15" viewBox="0 0 17 15" fill="none" stroke="#fff" aria-hidden="true">
                <path d="M.5 5.500h3l4-4v12l-4-4h-3zM9.500 5c1 1.500 1 3.500 0 5" />
                <path d="M11.500 3c2 3 2 6 0 9M13.500 1c3 4 3 9 0 13" stroke="#888" />
              </svg>
            </button>
            <button className="flex w-9 justify-center">NOB</button>
          </>
        )}
        <time className={tray ? "w-16 text-center" : "mr-[6px] w-16 text-center"}>
          11:09
          <br />
          24.10.2020
        </time>
        {tray && (
          <button aria-label="Notifications" className="mr-1 flex h-10 w-[51px] items-center justify-center border-r border-[#666]">
            <svg width="26" height="30" viewBox="0 0 26 30" aria-hidden="true">
              <path d="M1 3h16v13H9l-3 4v-4H1z" fill="#fff" />
              <path d="M3 6.500h12M3 9.500h12M3 12.500h12" stroke="#04080f" />
              <circle cx="16.500" cy="20.500" r="8" fill="#2b2b2b" stroke="#aaa" />
              <text x="16.500" y="25" textAnchor="middle" fontSize="12" fill="#fff">
                1
              </text>
            </svg>
          </button>
        )}
      </div>
    </footer>
  );
}

export default function App() {
  return (
    <div className="grid min-h-screen grid-cols-2 font-['Open_Sans','Noto_Sans',sans-serif]">
      <div className="flex min-w-0 flex-col">
        <FigureWindow />
        <Taskbar tray />
      </div>
      <div className="flex min-w-0 flex-col">
        <ModelWindow />
        <Taskbar />
      </div>
    </div>
  );
}
